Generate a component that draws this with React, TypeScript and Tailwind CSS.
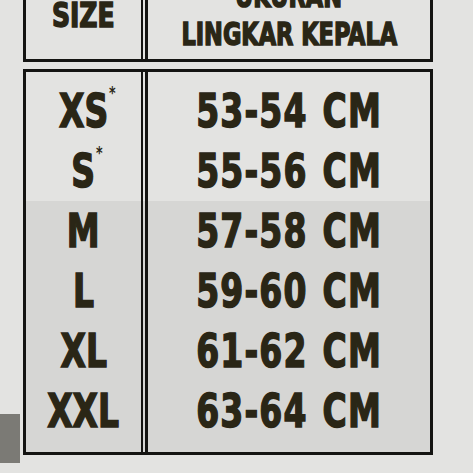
import React from "react";

type Row = { size: string; star: boolean; range: string };

const rowsTop: Row[] = [
  { size: "XS", star: true, range: "53-54 CM" },
  { size: "S", star: true, range: "55-56 CM" },
];
const rowsBottom: Row[] = [
  { size: "M", star: false, range: "57-58 CM" },
  { size: "L", star: false, range: "59-60 CM" },
  { size: "XL", star: false, range: "61-62 CM" },
  { size: "XXL", star: false, range: "63-64 CM" },
];

function Section({ rows, pad, bg }: { rows: Row[]; pad: string; bg: string }) {
  return (
    <div className={"flex " + bg}>
      <div className={"w-[115px] flex flex-col " + pad}>
        {rows.map((r) => (
          <div key={r.size} className="h-[60px] flex items-center justify-center text-[47px] leading-[60px] font-bold">
            <span className="relative inline-block scale-x-[0.78]">
              {r.size}
              {r.star && (
                <span className="absolute left-full top-[3px] ml-[1px] text-[18px] leading-[18px] [-webkit-text-stroke:0px]">*</span>
              )}
            </span>
          </div>
        ))}
      </div>
      <div className="w-[7px] border-l-2 border-r-[3px] border-[#141412]" />
      <div className={"flex-1 flex flex-col " + pad}>
        {rows.map((r) => (
          <div key={r.range} className="h-[60px] flex items-center justify-center text-[47px] leading-[60px] font-bold">
            <span className="inline-block whitespace-nowrap scale-x-[0.78] tracking-[1.5px] [word-spacing:3px]">{r.range}</span>
          </div>
        ))}
      </div>
    </div>
  );
}

export default function App() {
  return (
    <div className="relative w-[473px] h-[473px] overflow-hidden bg-[#e3e3e1] text-[#2a2616] font-['DejaVu_Sans_Condensed','DejaVu_Sans',sans-serif] [-webkit-text-stroke:1.5px_#2a2616]">
      {/* header */}
      <div className="ml-[23px] w-[410px] mt-[-28px] border-[3px] border-[#141412] flex">
        <div className="w-[115px] flex items-end justify-center pb-[25px] text-[34px] leading-[38px] font-bold">
          <span className="inline-block scale-x-[0.82]">SIZE</span>
        </div>
        <div className="w-[7px] border-l-2 border-r-[3px] border-[#141412]" />
        <div className="flex-1 flex flex-col items-center pt-[2px] pb-[6px] text-[32px] leading-[38px] font-bold">
          <div className="scale-x-[0.78] whitespace-nowrap">UKURAN</div>
          <div className="scale-x-[0.78] whitespace-nowrap">LINGKAR KEPALA</div>
        </div>
      </div>
      {/* body */}
      <div className="ml-[23px] w-[410px] mt-[7px] border-[3px] border-[#141412] flex flex-col">
        <Section rows={rowsTop} pad="pt-[9px]" bg="bg-[#e3e3e1]" />
        <Section rows={rowsBottom} pad="pb-[11px]" bg="bg-[#d6d6d4]" />
      </div>
      <div className="absolute left-0 top-[414px] w-[20px] h-[49px] bg-[#7b7a75]" />
    </div>
  );
}
